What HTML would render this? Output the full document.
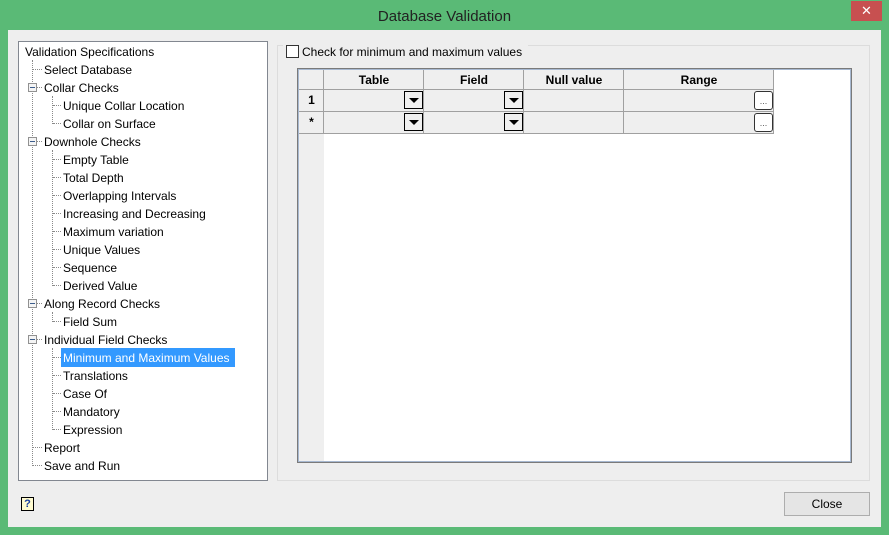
<!DOCTYPE html>
<html><head><meta charset="utf-8"><style>
*{margin:0;padding:0;box-sizing:border-box}
body{width:889px;height:535px;background:#5aba76;position:relative;overflow:hidden;font-family:"Liberation Sans",sans-serif;font-size:12px;color:#000}
.a{position:absolute}
.t{position:absolute;line-height:18px;white-space:nowrap}
.h{position:absolute;border-top:1px dotted #8a8a8a;height:0}
.v{position:absolute;border-left:1px dotted #8a8a8a;width:0}
.exp{position:absolute;width:9px;height:9px;border:1px solid #919191;background:#f4f4f4}
.exp:after{content:"";position:absolute;left:1px;top:3px;width:5px;height:1px;background:#3c5d8c}
.dd{position:absolute;width:19px;height:18px;border:1px solid #000;background:#f0f0f0}
.dd:after{content:"";position:absolute;left:4px;top:6px;border-left:5px solid transparent;border-right:5px solid transparent;border-top:5px solid #000}
.el{position:absolute;width:19px;height:19px;border:1px solid #333;border-radius:3px;background:#fff;font-size:9px;text-align:center;line-height:19px;color:#555}
</style></head><body>
<div class="t" style="left:0;width:889px;top:8px;text-align:center;font-size:15px;color:#222">Database Validation</div>
<div class="a" style="left:851px;top:1px;width:31px;height:20px;background:#c75050;color:#fff;text-align:center;font-size:13px;line-height:20px">✕</div>
<div class="a" style="left:8px;top:30px;width:873px;height:497px;background:#eeeeee"></div>
<!-- tree -->
<div class="a" style="left:18px;top:41px;width:250px;height:440px;background:#fff;border:1px solid #828790"></div>
<div class="v" style="left:32px;top:60px;height:406px"></div>
<div class="v" style="left:52px;top:96px;height:28px"></div>
<div class="v" style="left:52px;top:150px;height:136px"></div>
<div class="v" style="left:52px;top:312px;height:10px"></div>
<div class="v" style="left:52px;top:348px;height:82px"></div>
<div class="a" style="left:61px;top:348px;width:174px;height:19px;background:#3399ff"></div>
<div id="tree"></div>
<script>
var items=[["Validation Specifications",0],["Select Database",1],["Collar Checks",1,1],["Unique Collar Location",2],["Collar on Surface",2],["Downhole Checks",1,1],["Empty Table",2],["Total Depth",2],["Overlapping Intervals",2],["Increasing and Decreasing",2],["Maximum variation",2],["Unique Values",2],["Sequence",2],["Derived Value",2],["Along Record Checks",1,1],["Field Sum",2],["Individual Field Checks",1,1],["Minimum and Maximum Values",2],["Translations",2],["Case Of",2],["Mandatory",2],["Expression",2],["Report",1],["Save and Run",1]];
var h="";items.forEach(function(it,i){var c=51+18*i;var x=[25,44,63][it[1]];
if(it[1]==1){h+='<div class="h" style="left:33px;top:'+c+'px;width:9px"></div>';}
if(it[1]==2){h+='<div class="h" style="left:53px;top:'+c+'px;width:8px"></div>';}
if(it[2]){h+='<div class="exp" style="left:28px;top:'+(c-4)+'px"></div>';}
h+='<div class="t" style="left:'+x+'px;top:'+(c-8)+'px;'+(i==17?'color:#fff':'')+'">'+it[0]+'</div>';});
document.getElementById("tree").innerHTML=h;
</script>
<!-- group -->
<div class="a" style="left:277px;top:45px;width:593px;height:436px;border:1px solid #dcdcdc"></div>
<div class="a" style="left:283px;top:44px;width:245px;height:16px;background:#eeeeee"></div>
<div class="a" style="left:286px;top:45px;width:13px;height:13px;border:1px solid #333;background:#fff"></div>
<div class="t" style="left:302px;top:43px">Check for minimum and maximum values</div>
<!-- grid -->
<div class="a" style="left:297px;top:68px;width:555px;height:395px;border:1px solid #7a7a7a;background:#fff"></div>
<div class="a" style="left:298px;top:69px;width:553px;height:393px;border:1px solid #a7b8d0"></div>
<div class="a" style="left:299px;top:70px;width:25px;height:391px;background:#efefef"></div>
<div class="a" style="left:299px;top:70px;width:475px;height:20px;background:#efefef;border-bottom:1px solid #a0a0a0"></div>
<div class="a" style="left:299px;top:90px;width:475px;height:44px;background:#efefef"></div>
<div class="a" style="left:299px;top:111px;width:475px;height:1px;background:#a0a0a0"></div>
<div class="a" style="left:299px;top:133px;width:475px;height:1px;background:#a0a0a0"></div>
<div class="a" style="left:323px;top:70px;width:1px;height:64px;background:#a0a0a0"></div>
<div class="a" style="left:423px;top:70px;width:1px;height:64px;background:#a0a0a0"></div>
<div class="a" style="left:523px;top:70px;width:1px;height:64px;background:#a0a0a0"></div>
<div class="a" style="left:623px;top:70px;width:1px;height:64px;background:#a0a0a0"></div>
<div class="a" style="left:773px;top:70px;width:1px;height:64px;background:#a0a0a0"></div>
<div class="t" style="left:324px;width:100px;top:71px;text-align:center;font-weight:bold">Table</div>
<div class="t" style="left:424px;width:100px;top:71px;text-align:center;font-weight:bold">Field</div>
<div class="t" style="left:524px;width:100px;top:71px;text-align:center;font-weight:bold">Null value</div>
<div class="t" style="left:624px;width:150px;top:71px;text-align:center;font-weight:bold">Range</div>
<div class="t" style="left:299px;width:25px;top:91px;text-align:center;font-weight:bold">1</div>
<div class="t" style="left:299px;width:25px;top:113px;text-align:center;font-weight:bold">*</div>
<div class="dd" style="left:404px;top:91px"></div>
<div class="dd" style="left:504px;top:91px"></div>
<div class="dd" style="left:404px;top:113px"></div>
<div class="dd" style="left:504px;top:113px"></div>
<div class="el" style="left:754px;top:91px">...</div>
<div class="el" style="left:754px;top:113px">...</div>
<!-- bottom -->
<div class="a" style="left:21px;top:497px;width:13px;height:14px;border:1px solid #000;background:#fffbd0;font-size:11px;font-weight:bold;text-align:center;line-height:12px;color:#1a3fa0">?</div>
<div class="a" style="left:784px;top:492px;width:86px;height:24px;border:1px solid #adadad;background:#e5e5e5;text-align:center;line-height:22px">Close</div>
</body></html>
